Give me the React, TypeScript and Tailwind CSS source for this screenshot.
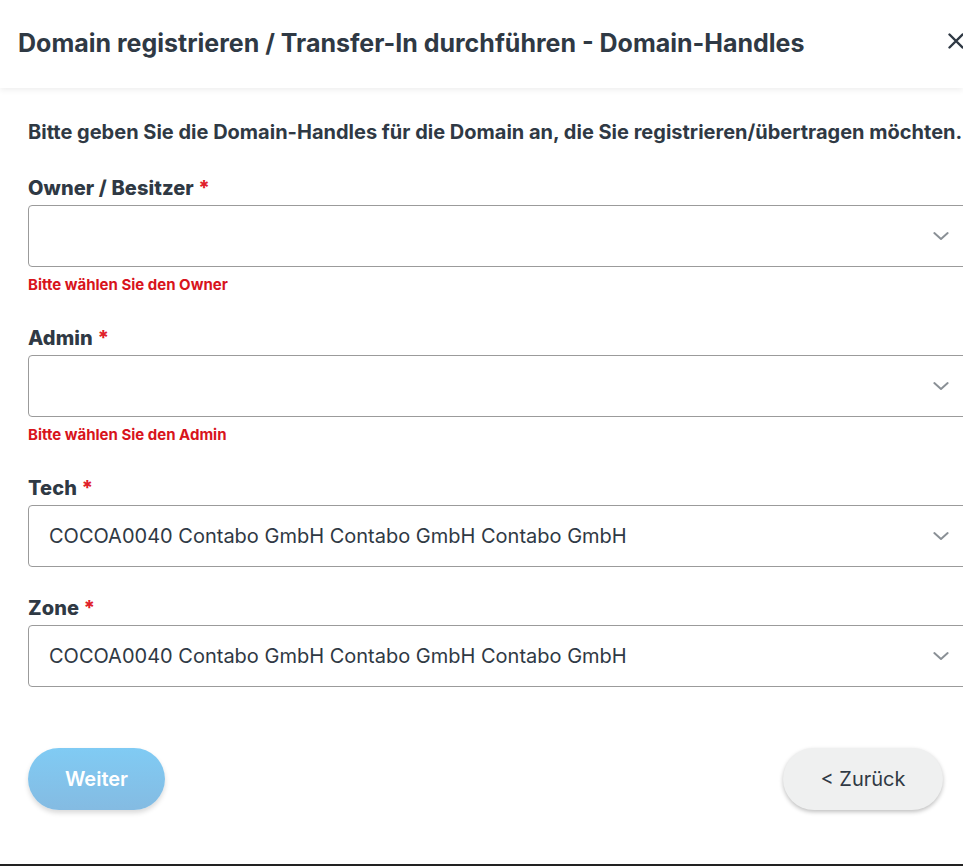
import React from "react";

const Chevron = () => (
  <svg width="20" height="20" viewBox="0 0 24 24" fill="none" stroke="#8a9096" strokeWidth="2.4" strokeLinecap="round" strokeLinejoin="round">
    <path d="M4 8.5l8 7 8-7" />
  </svg>
);

function Field({ label, value, error, className }: { label: string; value?: string; error?: string; className?: string }) {
  return (
    <div className={className}>
      <div className="text-[20px] leading-[24px] font-extrabold tracking-[0.1px] text-[#2f3944]">
        {label} <span className="text-[#e0202a]">*</span>
      </div>
      <div className="relative mt-[5px] h-[62px] w-[942px] rounded-[4px] border border-[#9b9b9b] bg-white flex items-center pl-[20px]">
        {value && <span className="text-[20px] text-[#2f3944] font-normal">{value}</span>}
        <div className="absolute right-[18px] top-[20px]">
          <Chevron />
        </div>
      </div>
      {error && (
        <div className="mt-[8px] text-[15px] leading-[20px] font-bold text-[#d8141c]">{error}</div>
      )}
    </div>
  );
}

export default function App() {
  return (
    <div className="relative h-[868px] w-[963px] overflow-hidden bg-white" style={{ fontFamily: "Inter, 'Noto Sans', sans-serif" }}>
      <div className="relative z-10 flex h-[88px] items-center bg-white pl-[18px] shadow-[0_2px_6px_rgba(0,0,0,0.07)]">
        <h1 className="whitespace-nowrap text-[25px] font-bold text-[#2f3944]">
          Domain registrieren / Transfer-In durchführen - Domain-Handles
        </h1>
        <svg className="absolute left-[948px] top-[33px]" width="16" height="16" viewBox="0 0 16 16" fill="none" stroke="#2f3944" strokeWidth="2.4" strokeLinecap="round">
          <path d="M1.5 1.5l13 13M14.5 1.5l-13 13" />
        </svg>
      </div>
      <div className="pl-[28px] pt-[32px]">
        <p className="whitespace-nowrap text-[20px] leading-[24px] font-bold text-[#2f3944]">
          Bitte geben Sie die Domain-Handles für die Domain an, die Sie registrieren/übertragen möchten.
        </p>
        <Field className="mt-[32px]" label="Owner / Besitzer" error="Bitte wählen Sie den Owner" />
        <Field className="mt-[31px]" label="Admin" error="Bitte wählen Sie den Admin" />
        <Field className="mt-[31px]" label="Tech" value="COCOA0040 Contabo GmbH Contabo GmbH Contabo GmbH" />
        <Field className="mt-[29px]" label="Zone" value="COCOA0040 Contabo GmbH Contabo GmbH Contabo GmbH" />
        <div className="mt-[61px] flex w-[915px] items-center justify-between">
          <button className="h-[62px] w-[137px] rounded-full bg-gradient-to-b from-[#80cbf4] to-[#84bbe2] text-[20px] font-semibold text-white shadow-[0_3px_5px_rgba(0,0,0,0.15)]">
            Weiter
          </button>
          <button className="h-[62px] w-[160px] rounded-full bg-[#eff0f0] text-[20px] font-normal text-[#2f3944] shadow-[0_2px_4px_rgba(0,0,0,0.25)]">
            &lt; Zurück
          </button>
        </div>
      </div>
      <div className="absolute bottom-[2px] left-0 h-[2px] w-full bg-[#222]" />
    </div>
  );
}
